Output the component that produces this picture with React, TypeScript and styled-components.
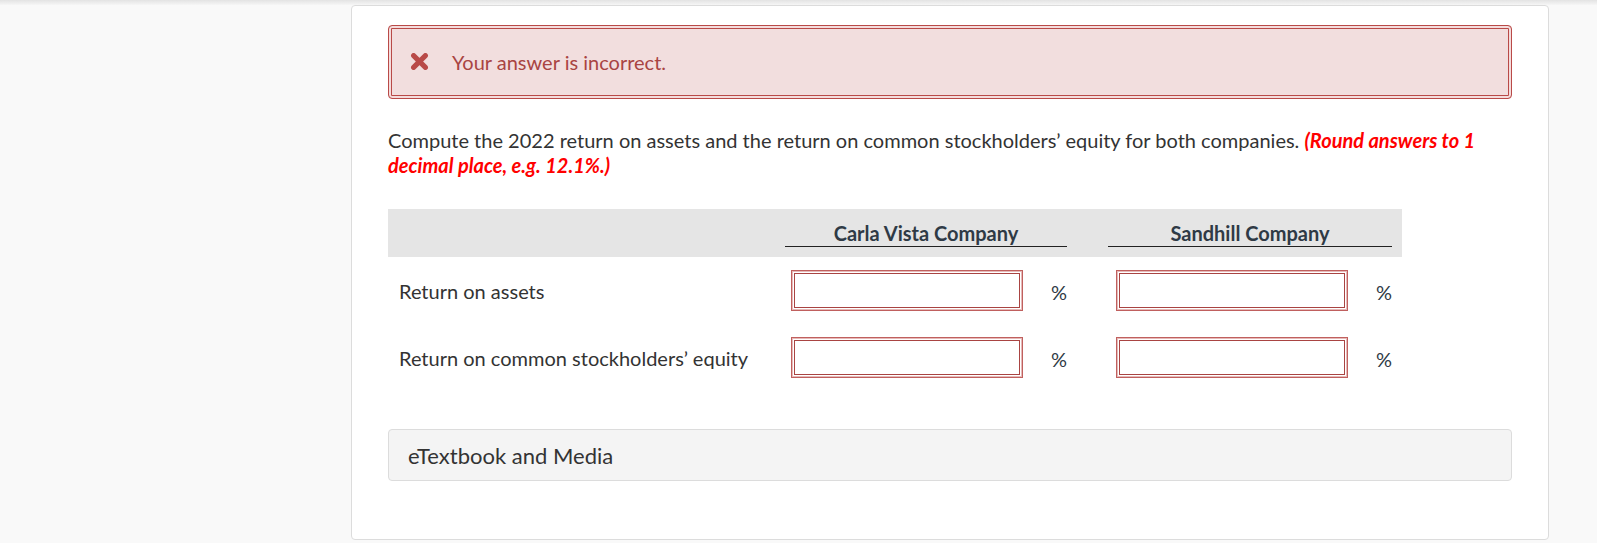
import React from "react";
import styled, { createGlobalStyle } from "styled-components";

const GlobalStyle = createGlobalStyle`
  html, body {
    margin: 0;
    padding: 0;
    background: #f9f9f9;
  }
  body {
    font-family: Lato, "Open Sans", "Liberation Sans", sans-serif;
    color: #333;
  }
  * { box-sizing: border-box; }
`;

const Page = styled.div`
  width: 1597px;
  min-height: 543px;
  display: flex;
  flex-direction: column;
`;

const TopShade = styled.div`
  height: 5px;
  background: linear-gradient(#e3e3e3, #f6f6f6);
`;

const Main = styled.div`
  padding: 0 48px 3px 351px;
`;

const Card = styled.section`
  background: #fff;
  border: 1px solid #dcdcdc;
  border-radius: 4px;
  padding: 19px 36px 58px 36px;
`;

const Alert = styled.div`
  display: flex;
  align-items: center;
  gap: 23px;
  height: 74px;
  padding: 0 21px;
  background: #f2dede;
  border: 1px solid #b94a48;
  border-radius: 4px;
  box-shadow: inset 0 0 0 2px #f4dcdc, inset 0 0 0 3px #b94a48;
  color: #a94442;
  font-size: 20px;
  line-height: 24px;
`;

const AlertIcon = styled.svg`
  width: 19px;
  height: 17px;
  flex: none;
  margin-top: -2px;
`;

const Prompt = styled.p`
  margin: 29px 0 0;
  font-size: 20px;
  line-height: 25px;
  color: #333;
`;

const Hint = styled.em`
  font-weight: 700;
  font-style: italic;
  color: #ff0000;
`;

const Table = styled.div`
  margin-top: 31px;
  width: 1014px;
  display: grid;
  grid-template-columns: 397px 282px 325px;
  padding-right: 10px;
  box-sizing: content-box;
`;

const HeadBand = styled.div`
  grid-column: 1 / -1;
  display: grid;
  grid-template-columns: subgrid;
  height: 48px;
  background: #e5e5e5;
  margin-right: -10px;
  padding-right: 10px;
`;

const ColHead = styled.div<{ $lead: number }>`
  align-self: end;
  margin: 0 0 10px ${(p) => p.$lead}px;
  padding-bottom: 2px;
  border-bottom: 1px solid #222;
  text-align: center;
  font-weight: 700;
  font-size: 20px;
  line-height: 22px;
  color: #2f3a45;
`;

const Row = styled.div`
  grid-column: 1 / -1;
  display: grid;
  grid-template-columns: subgrid;
  height: 67px;
  align-items: center;
`;

const Label = styled.div`
  padding-left: 11px;
  font-size: 20px;
  line-height: 24px;
  color: #333;
`;

const Cell = styled.div<{ $lead: number }>`
  display: flex;
  align-items: center;
  padding-left: ${(p) => p.$lead}px;
`;

const Input = styled.input`
  width: 232px;
  height: 41px;
  flex: none;
  margin: 0;
  padding: 4px 8px;
  background: #fff;
  border: 1px solid #c0605e;
  border-radius: 0;
  box-shadow: inset 0 0 0 1px #e6b9b8, inset 0 0 0 2px #fff,
    inset 0 0 0 3px #a94442;
  font-family: inherit;
  font-size: 18px;
  outline: none;
`;

const Unit = styled.span`
  flex: 1;
  text-align: right;
  font-size: 20px;
  line-height: 24px;
  color: #2f3a45;
  padding-top: 3px;
`;

const Media = styled.div`
  margin-top: 38px;
  height: 52px;
  display: flex;
  align-items: center;
  padding-left: 19px;
  background: #f4f4f4;
  border: 1px solid #dcdcdc;
  border-radius: 4px;
  font-size: 22px;
  color: #333;
`;

const rows = [
  "Return on assets",
  "Return on common stockholders\u2019 equity",
];

export default function App() {
  return (
    <Page>
      <GlobalStyle />
      <TopShade />
      <Main>
        <Card>
          <Alert role="alert">
            <AlertIcon viewBox="0 0 18 16" aria-hidden="true">
              <path
                d="M3.4 2.4 L14.6 13.6 M14.6 2.4 L3.4 13.6"
                stroke="#b94a48"
                strokeWidth="4.8"
                strokeLinecap="round"
                fill="none"
              />
            </AlertIcon>
            <span>Your answer is incorrect.</span>
          </Alert>

          <Prompt>
            Compute the 2022 return on assets and the return on common
            stockholders’ equity for both companies.{" "}
            <Hint>(Round answers to 1 decimal place, e.g. 12.1%.)</Hint>
          </Prompt>

          <Table>
            <HeadBand>
              <div />
              <ColHead $lead={0}>Carla Vista Company</ColHead>
              <ColHead $lead={41}>Sandhill Company</ColHead>
            </HeadBand>
            {rows.map((r) => (
              <Row key={r}>
                <Label>{r}</Label>
                <Cell $lead={6}>
                  <Input type="text" aria-label={`${r} Carla Vista`} />
                  <Unit>%</Unit>
                </Cell>
                <Cell $lead={49}>
                  <Input type="text" aria-label={`${r} Sandhill`} />
                  <Unit>%</Unit>
                </Cell>
              </Row>
            ))}
          </Table>

          <Media>eTextbook and Media</Media>
        </Card>
      </Main>
    </Page>
  );
}
